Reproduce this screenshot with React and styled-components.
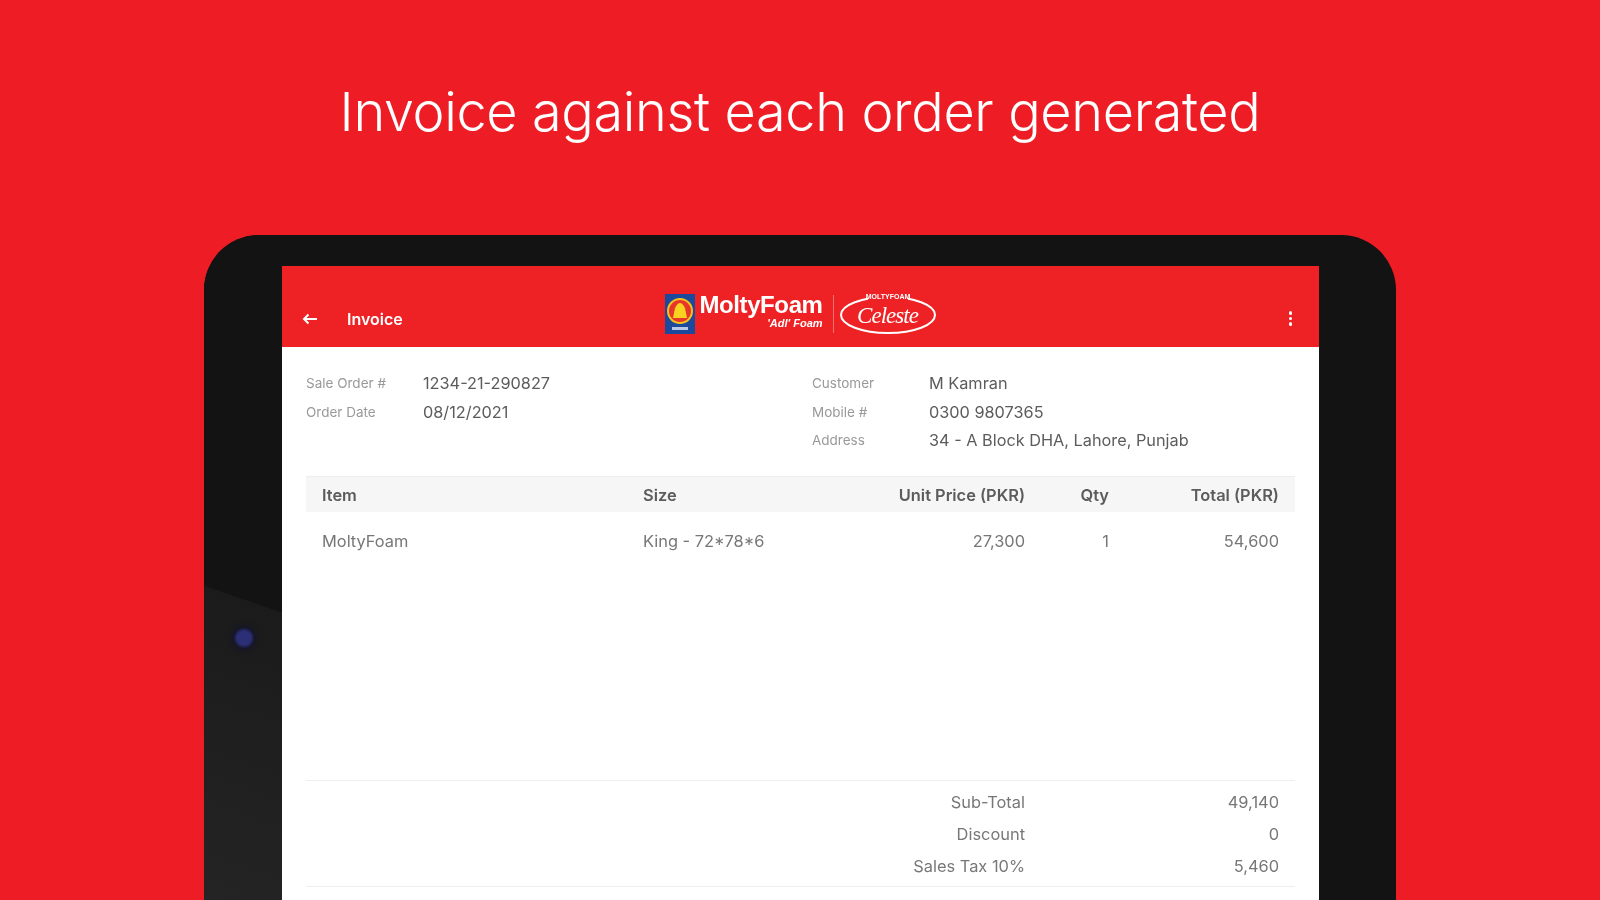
import React from 'react'
import styled, { createGlobalStyle } from 'styled-components'

const Global = createGlobalStyle`
  html, body { margin: 0; padding: 0; background: #ee1d25; }
  * { box-sizing: border-box; }
`

const info = {
  left: [
    ['Sale Order #', '1234-21-290827'],
    ['Order Date', '08/12/2021'],
  ],
  right: [
    ['Customer', 'M Kamran'],
    ['Mobile #', '0300 9807365'],
    ['Address', '34 - A Block DHA, Lahore, Punjab'],
  ],
}

const totals = [
  ['Sub-Total', '49,140'],
  ['Discount', '0'],
  ['Sales Tax 10%', '5,460'],
]

function MoltyBadge() {
  return (
    <svg width="30" height="40" viewBox="0 0 30 40">
      <rect width="30" height="40" fill="#1b4a9c" />
      <circle cx="15" cy="17" r="12" fill="#e8352a" />
      <circle cx="15" cy="17" r="12" fill="none" stroke="#f4c21c" strokeWidth="2" />
      <path d="M8 24 L10 14 Q15 4 20 14 L22 24 Z" fill="#f8d21e" />
      <rect x="7" y="33" width="16" height="3" fill="#b9c8e6" />
    </svg>
  )
}

function CelesteLogo() {
  return (
    <svg width="96" height="44" viewBox="0 0 96 44">
      <ellipse cx="48" cy="23" rx="47" ry="18" fill="none" stroke="#fff" strokeWidth="2" />
      <rect x="28" y="0" width="40" height="8" fill="#ee2224" />
      <text x="48" y="7" textAnchor="middle" fill="#fff" fontFamily="Liberation Sans, sans-serif" fontSize="7" fontWeight="700">MOLTYFOAM</text>
      <text x="48" y="31" textAnchor="middle" fill="#fff" fontFamily="Liberation Serif, serif" fontStyle="italic" fontSize="23" textLength="62">Celeste</text>
    </svg>
  )
}

export default function App() {
  return (
    <Page>
      <Global />
      <Title>Invoice against each order generated</Title>
      <Tablet>
        <LeftBezel>
          <Camera />
        </LeftBezel>
        <Screen>
          <AppBar>
            <BarLeft>
              <svg width="16" height="12" viewBox="0 0 16 12" fill="none" stroke="#fff" strokeWidth="2">
                <path d="M15 6H2M6.5 1.5 2 6l4.5 4.5" />
              </svg>
              <BarTitle>Invoice</BarTitle>
            </BarLeft>
            <Logo>
              <MoltyBadge />
              <Wordmark>
                <MoltyName>MoltyFoam</MoltyName>
                <MoltyTag>'Adl' Foam</MoltyTag>
              </Wordmark>
              <LogoRule />
              <CelesteLogo />
            </Logo>
            <MenuDots>
              <i /><i /><i />
            </MenuDots>
          </AppBar>
          <Body>
            <InfoGrid>
              <InfoColumn>
                {info.left.map(([k, v]) => (
                  <InfoRow key={k}><InfoLabel>{k}</InfoLabel><InfoValue>{v}</InfoValue></InfoRow>
                ))}
              </InfoColumn>
              <InfoColumn>
                {info.right.map(([k, v]) => (
                  <InfoRow key={k}><InfoLabel>{k}</InfoLabel><InfoValue>{v}</InfoValue></InfoRow>
                ))}
              </InfoColumn>
            </InfoGrid>
            <HeadRow>
              <span>Item</span>
              <span>Size</span>
              <Num>Unit Price (PKR)</Num>
              <Num>Qty</Num>
              <Num>Total (PKR)</Num>
            </HeadRow>
            <ItemRow>
              <span>MoltyFoam</span>
              <span>King - 72*78*6</span>
              <Num>27,300</Num>
              <Num>1</Num>
              <Num>54,600</Num>
            </ItemRow>
            <Totals>
              {totals.map(([k, v]) => (
                <TotalRow key={k}><Num>{k}</Num><Num>{v}</Num></TotalRow>
              ))}
            </Totals>
          </Body>
        </Screen>
        <RightBezel />
      </Tablet>
    </Page>
  )
}

const Page = styled.div`
  width: 1600px;
  height: 900px;
  overflow: hidden;
  background: #ee1d25;
  display: flex;
  flex-direction: column;
  align-items: center;
`
const Title = styled.h1`
  margin: 0;
  height: 235px;
  padding-top: 78px;
  font-family: "Inter", sans-serif;
  font-weight: 300;
  font-size: 54px;
  line-height: 68px;
  letter-spacing: -0.36px;
  color: #fff;
`
const Tablet = styled.div`
  width: 1192px;
  height: 665px;
  flex: none;
  padding-top: 31px;
  border-radius: 55px 55px 0 0;
  background: #131313;
  display: flex;
`
const LeftBezel = styled.div`
  width: 78px;
  margin-top: -31px;
  border-top-left-radius: 55px;
  padding-top: 394px;
  display: flex;
  flex-direction: column;
  align-items: center;
  background: linear-gradient(199deg, #131313 0 357px, #1b1b1b 357px, #242424 100%);
`
const Camera = styled.div`
  width: 18px;
  height: 18px;
  margin-left: 2px;
  border-radius: 50%;
  background: #2b2f75;
  box-shadow: 0 0 5px 3px #14142c;
  filter: blur(1px);
`
const RightBezel = styled.div`
  width: 77px;
`
const Screen = styled.div`
  width: 1037px;
  background: #fff;
  display: flex;
  flex-direction: column;
  font-family: "Inter", "Liberation Sans", sans-serif;
  filter: blur(0.7px);
`
const AppBar = styled.div`
  height: 81px;
  flex: none;
  background: #ee2224;
  position: relative;
  display: flex;
  align-items: center;
  justify-content: center;
`
const BarLeft = styled.div`
  position: absolute;
  left: 20px;
  top: 43px;
  display: flex;
  align-items: center;
  gap: 29px;
`
const BarTitle = styled.span`
  color: #fff;
  font-size: 16px;
  font-weight: 600;
`
const Logo = styled.div`
  display: flex;
  align-items: center;
  margin-top: 15px;
`
const Wordmark = styled.div`
  display: flex;
  flex-direction: column;
  align-items: flex-end;
  margin: -6px 0 0 4px;
`
const MoltyName = styled.span`
  color: #fff;
  font-family: "Liberation Sans", sans-serif;
  font-weight: 700;
  font-size: 24px;
  line-height: 25px;
  letter-spacing: -0.4px;
`
const MoltyTag = styled.span`
  color: #fff;
  font-family: "Liberation Sans", sans-serif;
  font-style: italic;
  font-weight: 700;
  font-size: 11px;
  line-height: 13px;
`
const LogoRule = styled.div`
  width: 1px;
  height: 38px;
  margin: 0 6px 0 10px;
  background: rgba(255, 255, 255, 0.35);
`
const MenuDots = styled.div`
  position: absolute;
  right: 27px;
  top: 45px;
  display: flex;
  flex-direction: column;
  gap: 2px;
  i {
    width: 3.5px;
    height: 3.5px;
    background: #fff;
    border-radius: 50%;
  }
`
const Body = styled.div`
  flex: 1;
  padding: 22px 24px 0;
  display: flex;
  flex-direction: column;
`
const InfoGrid = styled.div`
  display: grid;
  grid-template-columns: 506px 1fr;
  height: 107px;
`
const InfoColumn = styled.div`
  display: flex;
  flex-direction: column;
`
const InfoRow = styled.div`
  display: flex;
  align-items: center;
  height: 28.5px;
`
const InfoLabel = styled.span`
  width: 117px;
  font-size: 13.5px;
  color: #999;
`
const InfoValue = styled.span`
  font-size: 16.3px;
  color: #5c5c5c;
`
const Num = styled.span`
  text-align: right;
`
const HeadRow = styled.div`
  height: 36px;
  display: grid;
  grid-template-columns: 321px 200px 182px 84px 1fr;
  align-items: center;
  padding: 0 16px;
  background: #f6f6f6;
  border-top: 1px solid #eee;
  font-size: 16.4px;
  font-weight: 600;
  color: #5c5c5c;
`
const ItemRow = styled.div`
  height: 58px;
  display: grid;
  grid-template-columns: 321px 200px 182px 84px 1fr;
  align-items: center;
  padding: 0 16px;
  font-size: 16.4px;
  color: #777;
`
const Totals = styled.div`
  margin-top: 210px;
  height: 107px;
  padding: 5px 16px 0;
  border-top: 1px solid #eee;
  border-bottom: 1px solid #eee;
  display: flex;
  flex-direction: column;
`
const TotalRow = styled.div`
  height: 32.1px;
  display: grid;
  grid-template-columns: 703px 1fr;
  align-items: center;
  font-size: 16.4px;
  color: #777;
`
